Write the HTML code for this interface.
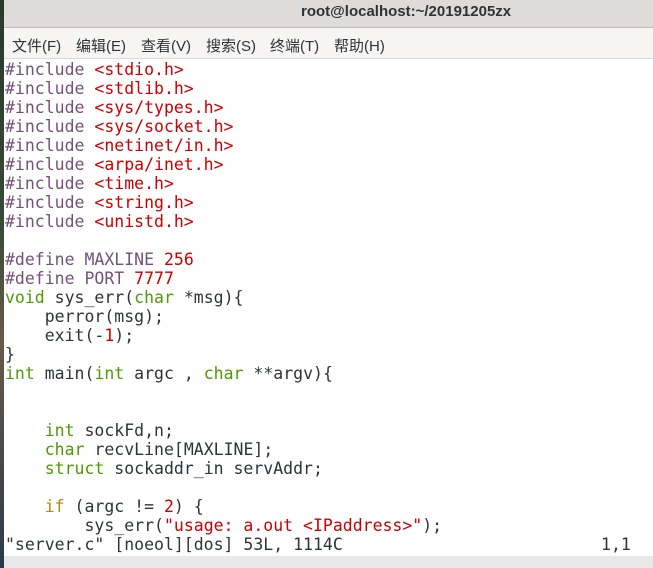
<!DOCTYPE html><html><head><style>
body{margin:0;width:653px;height:568px;overflow:hidden;background:#fff;position:relative;font-family:"Liberation Sans","Noto Sans CJK SC",sans-serif}
#l{position:absolute;left:0;top:0;width:4px;height:568px;background:linear-gradient(#2a3a2a,#3a4a3a 40%,#6a5a4a 60%,#2a3a4a)}
#t{position:absolute;left:4px;right:0;top:0;height:27px;background:#dedbd8;border-bottom:1px solid #c0bdb9}
#t span{position:absolute;left:297px;top:3px;font-size:15px;font-weight:bold;color:#2e3436}
#m{position:absolute;left:4px;right:0;top:28px;height:30px;background:#f6f5f4;border-bottom:1px solid #dcdad7}
#m span{position:absolute;top:7px;font-size:15px;color:#2e3436}
#c{position:absolute;left:5px;top:60px;font-family:"DejaVu Sans Mono",monospace;font-size:16.5px;line-height:19px;white-space:pre;color:#2e3436}
.p{color:#75507b}.r{color:#cc0000}.g{color:#4e9a06}.o{color:#b5860b}
#b{position:absolute;left:4px;right:0;top:556px;height:12px;background:#e8e8e8}
</style></head><body>
<div id="l"></div>
<div id="t"><span>root@localhost:~/20191205zx</span></div>
<div id="m"><span style="left:8px">文件(F)</span><span style="left:72px">编辑(E)</span><span style="left:137px">查看(V)</span><span style="left:202px">搜索(S)</span><span style="left:266px">终端(T)</span><span style="left:330px">帮助(H)</span></div>
<div id="c"><span class="p">#include </span><span class="r">&lt;stdio.h&gt;</span>
<span class="p">#include </span><span class="r">&lt;stdlib.h&gt;</span>
<span class="p">#include </span><span class="r">&lt;sys/types.h&gt;</span>
<span class="p">#include </span><span class="r">&lt;sys/socket.h&gt;</span>
<span class="p">#include </span><span class="r">&lt;netinet/in.h&gt;</span>
<span class="p">#include </span><span class="r">&lt;arpa/inet.h&gt;</span>
<span class="p">#include </span><span class="r">&lt;time.h&gt;</span>
<span class="p">#include </span><span class="r">&lt;string.h&gt;</span>
<span class="p">#include </span><span class="r">&lt;unistd.h&gt;</span>

<span class="p">#define MAXLINE </span><span class="r">256</span>
<span class="p">#define PORT </span><span class="r">7777</span>
<span class="g">void</span> sys_err(<span class="g">char</span> *msg){
    perror(msg);
    exit(-<span class="r">1</span>);
}
<span class="g">int</span> main(<span class="g">int</span> argc , <span class="g">char</span> **argv){


    <span class="g">int</span> sockFd,n;
    <span class="g">char</span> recvLine[MAXLINE];
    <span class="g">struct</span> sockaddr_in servAddr;

    <span class="o">if</span> (argc != <span class="r">2</span>) {
        sys_err(<span class="r">"usage: a.out &lt;IPaddress&gt;"</span>);
"server.c" [noeol][dos] 53L, 1114C                          1,1</div>
<div id="b"></div>
</body></html>
